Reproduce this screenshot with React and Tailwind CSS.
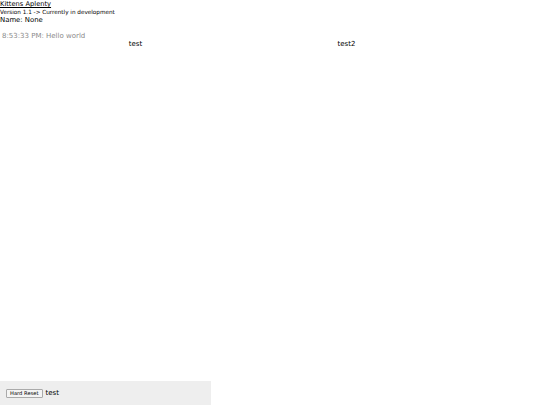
import React from "react";

const App = () => {
  return (
    <div
      className="relative h-[405px] w-[540px] bg-white text-black overflow-hidden antialiased"
      style={{ fontFamily: '"DejaVu Sans", Verdana, sans-serif' }}
    >
      <div className="flex flex-col">
        <span className="text-[6.7px] leading-[9px] underline">Kittens Aplenty</span>
        <span className="text-[5.7px] leading-[7px]">Version 1.1 -&gt; Currently in development</span>
        <span className="text-[6.9px] leading-[8px]">Name: None</span>
      </div>

      <div className="mt-[8px] pl-[2px] text-[7px] leading-[9px] text-[#8a8a8a]">
        8:53:33 PM: Hello world
      </div>

      <div className="flex pl-[30px] text-[7px] leading-[6px]">
        <div className="w-[211px] text-center">test</div>
        <div className="w-[211px] text-center">test2</div>
      </div>

      <div className="absolute bottom-0 left-0 flex h-[24px] w-[211px] items-center gap-[3px] bg-[#eee] pl-[6px]">
        <button className="h-[9px] rounded-[1px] border border-[#aaa] bg-[#f4f4f4] px-[3px] text-[5.2px] leading-[7px]">
          Hard Reset
        </button>
        <span className="text-[7px]">test</span>
      </div>
    </div>
  );
};

export default App;
